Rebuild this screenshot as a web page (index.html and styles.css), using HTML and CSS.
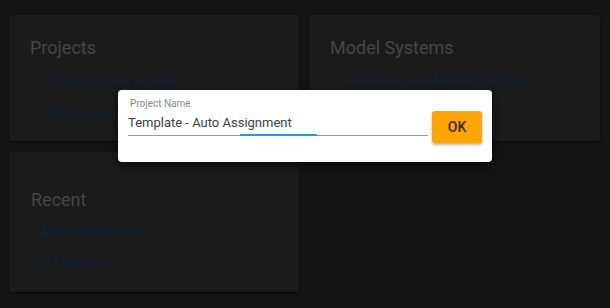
FILE: index.html
```html
<!DOCTYPE html>
<html>
<head>
<meta charset="utf-8">
<link rel="stylesheet" href="styles.css">
</head>
<body>
<div class="page">
  <section class="card card-projects">
    <h2 class="card-title">Projects</h2>
    <ul class="links">
      <li><a class="link">Create a new project</a></li>
      <li><a class="link">Open a project</a></li>
    </ul>
  </section>
  <section class="card card-models">
    <h2 class="card-title">Model Systems</h2>
    <ul class="links">
      <li><a class="link">Create a new Model System</a></li>
    </ul>
  </section>
  <section class="card card-recent">
    <h2 class="card-title">Recent</h2>
    <ul class="links recent">
      <li><a class="link">AutoAssignment</a></li>
      <li><a class="link">MTXtoCSV</a></li>
    </ul>
  </section>
</div>
<div class="dialog">
  <div class="field">
    <label class="field-label">Project Name</label>
    <div class="field-input">Template - Auto Assignment</div>
    <div class="field-line"><span class="field-focus"></span></div>
  </div>
  <button class="ok">OK</button>
</div>
</body>
</html>
```
FILE: styles.css
```css
html, body {
  margin: 0;
  padding: 0;
  background: #141414;
  font-family: Roboto, "Liberation Sans", sans-serif;
  width: 610px;
  height: 308px;
  overflow: hidden;
}
.page {
  display: grid;
  grid-template-columns: 290px 291px;
  grid-template-rows: 126px 140px;
  column-gap: 10px;
  row-gap: 11px;
  padding: 15px 10px 0 9px;
}
.card {
  background: #1b1b1b;
  border-radius: 3px;
  box-shadow: 0 1px 3px rgba(0,0,0,0.5);
  padding: 22px 21px 0 21px;
  box-sizing: border-box;
}
.card-recent { padding-top: 37px; padding-left: 22px; }
.card-title {
  margin: 0;
  font-size: 18px;
  font-weight: 400;
  color: #474747;
  line-height: 22px;
}
.links {
  list-style: none;
  margin: 11px 0 0 0;
  padding: 0 0 0 19px;
  display: flex;
  flex-direction: column;
  gap: 14px;
}
.links.recent { padding-left: 9px; margin-top: 10px; gap: 13px; }
.link {
  font-size: 14px;
  font-weight: 700;
  color: #122032;
  line-height: 17px;
}
.dialog {
  position: absolute;
  left: 118px;
  top: 90px;
  width: 374px;
  height: 72px;
  box-sizing: border-box;
  background: #ffffff;
  border-radius: 4px;
  box-shadow: 0 4px 12px rgba(0,0,0,0.6);
  display: flex;
  align-items: flex-start;
  padding: 8px 10px 0 10px;
  gap: 4px;
}
.field {
  width: 300px;
  display: flex;
  flex-direction: column;
}
.field-label {
  font-size: 10px;
  color: #8a8a8a;
  line-height: 12px;
  padding-left: 2px;
}
.field-input {
  font-size: 13px;
  color: #424242;
  line-height: 18px;
  margin-top: 4px;
}
.field-line {
  margin-top: 3px;
  height: 1px;
  background: #9a9a9a;
  position: relative;
}
.field-focus {
  position: absolute;
  left: 112px;
  width: 77px;
  top: -1px;
  height: 2px;
  background: #2196f3;
}
.ok {
  margin-top: 13px;
  width: 50px;
  height: 32px;
  border: none;
  border-radius: 3px;
  background: #ffa500;
  color: #33260a;
  font-family: Roboto, "Liberation Sans", sans-serif;
  font-size: 14px;
  font-weight: 500;
  box-shadow: 0 2px 3px rgba(0,0,0,0.3);
  padding: 0;
}
```
